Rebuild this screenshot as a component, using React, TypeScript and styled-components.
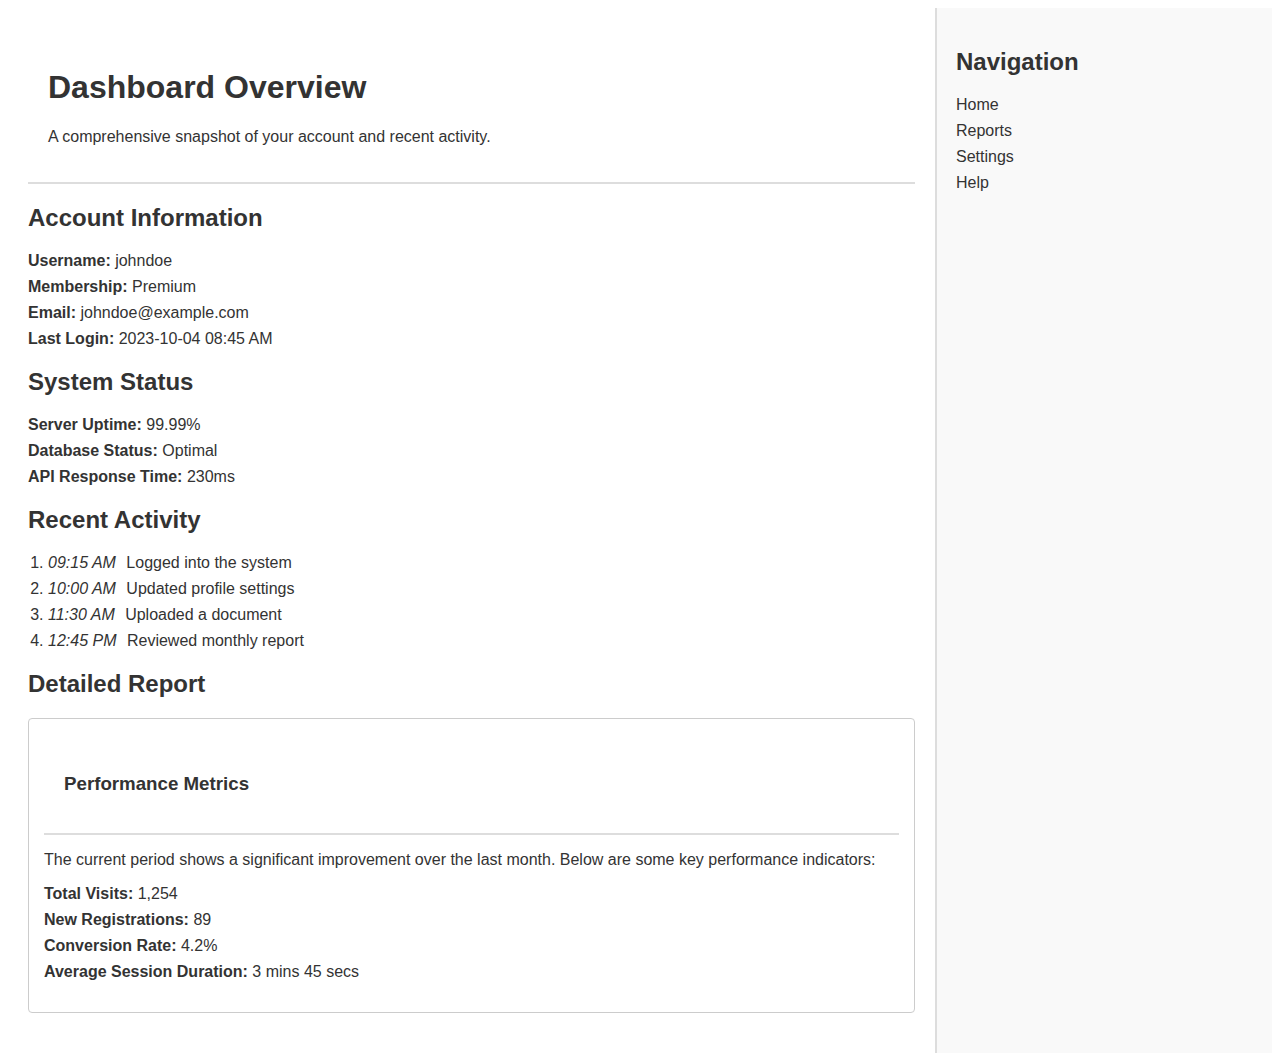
import React from "react";
import styled, { createGlobalStyle } from "styled-components";

const GlobalStyle = createGlobalStyle`
  body {
    margin: 8px;
    background: #ffffff;
    color: #333333;
    font-family: "Liberation Sans", Arial, sans-serif;
    font-size: 16px;
  }
`;

const Layout = styled.div`
  display: flex;
  min-height: calc(100vh - 16px);
`;

const Main = styled.main`
  flex: 1;
  min-width: 0;
  padding: 20px;
`;

const Header = styled.header`
  padding: 20px;
  border-bottom: 2px solid #dddddd;
  margin-bottom: 20px;
`;

const Title = styled.h1`
  font-size: 32px;
  font-weight: bold;
  margin: 21.44px 0;
  line-height: normal;
  color: #333333;
`;

const Subtitle = styled.p`
  margin: 16px 0;
  line-height: normal;
`;

const SectionTitle = styled.h2`
  font-size: 24px;
  font-weight: bold;
  line-height: normal;
  margin: 16px 0;
  color: #333333;
`;

const InfoList = styled.div<{ $bottom?: number }>`
  margin: 0 0 ${(p) => p.$bottom ?? 0}px;
`;

const InfoRow = styled.div`
  line-height: 26px;
`;

const Label = styled.strong`
  font-weight: bold;
`;

const ActivityList = styled.ol`
  margin: 0;
  padding-left: 20px;
`;

const ActivityItem = styled.li`
  line-height: 26px;
`;

const Time = styled.em`
  font-style: italic;
  margin-right: 6px;
`;

const Card = styled.section`
  border: 1px solid #cccccc;
  border-radius: 4px;
  padding: 15px;
  margin: 20px 0;
`;

const CardHeader = styled.div`
  padding: 20px;
  border-bottom: 2px solid #dddddd;
`;

const CardTitle = styled.h3`
  font-size: 18.72px;
  font-weight: bold;
  line-height: normal;
  margin: 18.72px 0;
  color: #333333;
`;

const CardText = styled.p`
  margin: 16px 0 12px;
  line-height: normal;
`;

const Sidebar = styled.aside`
  box-sizing: border-box;
  width: 337px;
  flex-shrink: 0;
  background: #f9f9f9;
  border-left: 2px solid #dddddd;
  padding: 20px 20px 20px 19px;
`;

const NavTitle = styled.h2`
  font-size: 24px;
  font-weight: bold;
  line-height: normal;
  margin: 20px 0 16px;
  color: #333333;
`;

const NavList = styled.ul`
  list-style: none;
  margin: 0;
  padding: 0;
`;

const NavItem = styled.li`
  line-height: 26px;
`;

const NavLink = styled.a`
  color: #333333;
  text-decoration: none;
`;

type Pair = [string, string];

const account: Pair[] = [
  ["Username:", "johndoe"],
  ["Membership:", "Premium"],
  ["Email:", "johndoe@example.com"],
  ["Last Login:", "2023-10-04 08:45 AM"],
];

const system: Pair[] = [
  ["Server Uptime:", "99.99%"],
  ["Database Status:", "Optimal"],
  ["API Response Time:", "230ms"],
];

const activity: Pair[] = [
  ["09:15 AM", "Logged into the system"],
  ["10:00 AM", "Updated profile settings"],
  ["11:30 AM", "Uploaded a document"],
  ["12:45 PM", "Reviewed monthly report"],
];

const metrics: Pair[] = [
  ["Total Visits:", "1,254"],
  ["New Registrations:", "89"],
  ["Conversion Rate:", "4.2%"],
  ["Average Session Duration:", "3 mins 45 secs"],
];

const Rows = ({ items, bottom }: { items: Pair[]; bottom?: number }) => (
  <InfoList $bottom={bottom}>
    {items.map(([k, v]) => (
      <InfoRow key={k}>
        <Label>{k}</Label> {v}
      </InfoRow>
    ))}
  </InfoList>
);

export default function App() {
  return (
    <>
      <GlobalStyle />
      <Layout>
        <Main>
          <Header>
            <Title>Dashboard Overview</Title>
            <Subtitle>A comprehensive snapshot of your account and recent activity.</Subtitle>
          </Header>

          <SectionTitle>Account Information</SectionTitle>
          <Rows items={account} />

          <SectionTitle>System Status</SectionTitle>
          <Rows items={system} />

          <SectionTitle>Recent Activity</SectionTitle>
          <ActivityList>
            {activity.map(([t, d]) => (
              <ActivityItem key={t}>
                <Time>{t}</Time> {d}
              </ActivityItem>
            ))}
          </ActivityList>

          <SectionTitle>Detailed Report</SectionTitle>
          <Card>
            <CardHeader>
              <CardTitle>Performance Metrics</CardTitle>
            </CardHeader>
            <CardText>
              The current period shows a significant improvement over the last month. Below are some key
              performance indicators:
            </CardText>
            <Rows items={metrics} bottom={12} />
          </Card>
        </Main>
        <Sidebar>
          <NavTitle>Navigation</NavTitle>
          <NavList>
            {["Home", "Reports", "Settings", "Help"].map((n) => (
              <NavItem key={n}>
                <NavLink href="#">{n}</NavLink>
              </NavItem>
            ))}
          </NavList>
        </Sidebar>
      </Layout>
    </>
  );
}
